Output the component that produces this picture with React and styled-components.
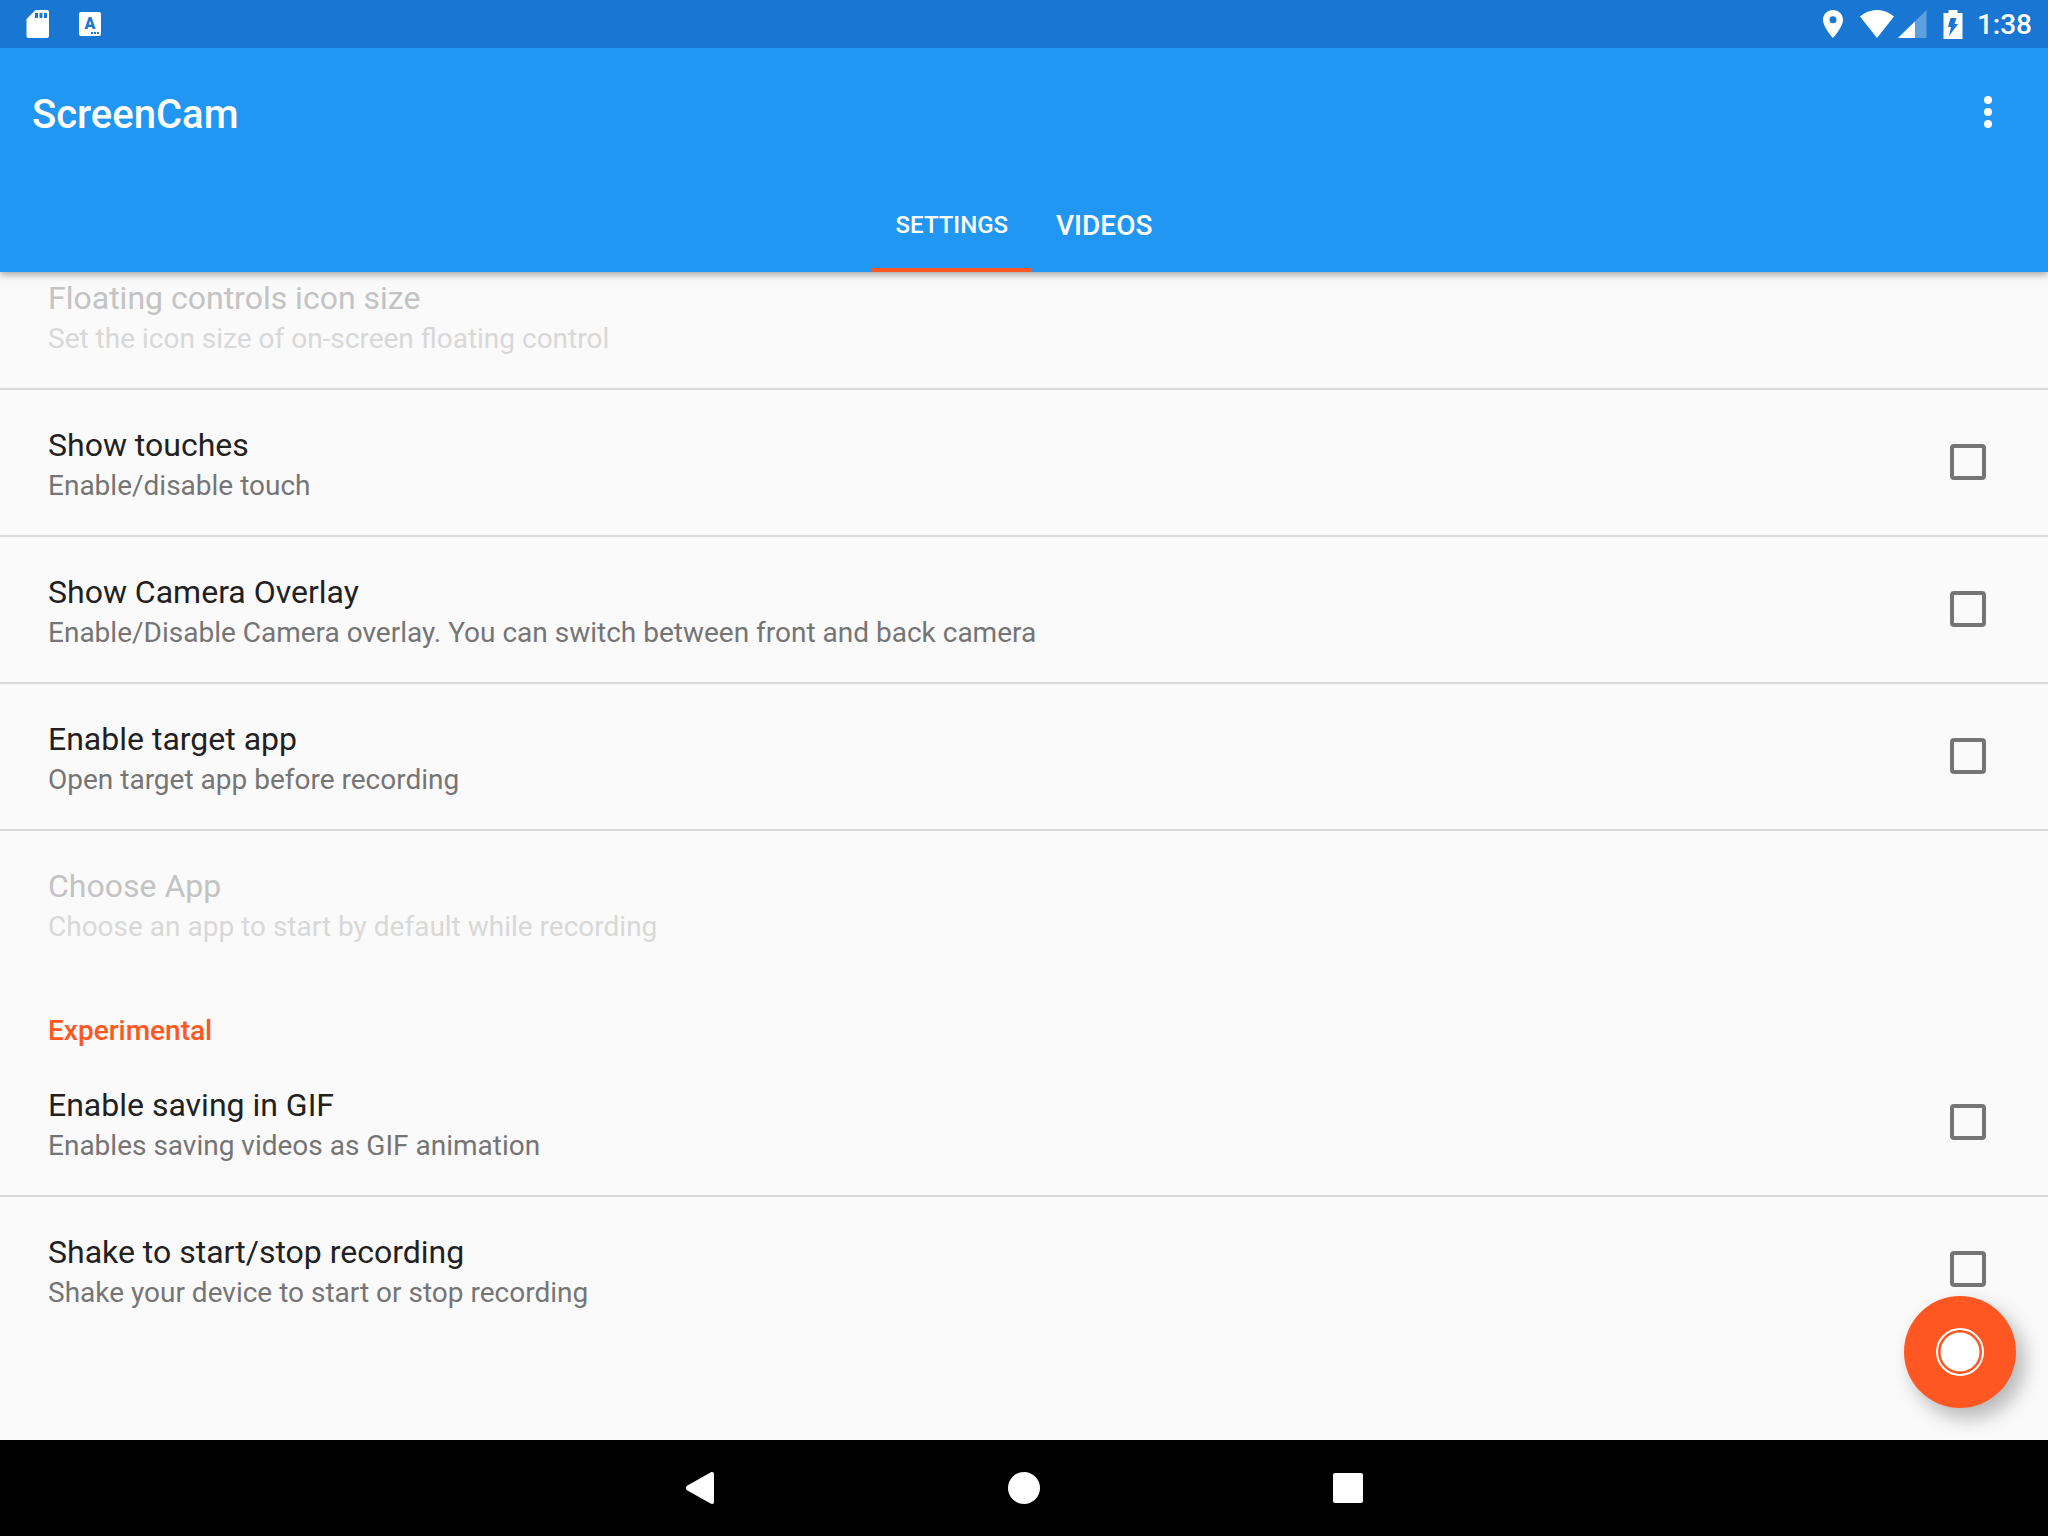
import React, { useState } from 'react';
import styled, { createGlobalStyle } from 'styled-components';

const tabs = [
    { id: 'settings', label: 'SETTINGS' },
    { id: 'videos', label: 'VIDEOS' },
];

const general = [
    { id: 'icon-size', title: 'Floating controls icon size', desc: 'Set the icon size of on-screen floating control', disabled: true },
    { id: 'touches', title: 'Show touches', desc: 'Enable/disable touch', check: true },
    { id: 'camera', title: 'Show Camera Overlay', desc: 'Enable/Disable Camera overlay. You can switch between front and back camera', check: true },
    { id: 'target', title: 'Enable target app', desc: 'Open target app before recording', check: true },
    { id: 'choose', title: 'Choose App', desc: 'Choose an app to start by default while recording', disabled: true },
];

const experimental = [
    { id: 'gif', title: 'Enable saving in GIF', desc: 'Enables saving videos as GIF animation', check: true },
    { id: 'shake', title: 'Shake to start/stop recording', desc: 'Shake your device to start or stop recording', check: true },
];

const StatusIcons = () => (
    <StatusBar>
        <StatusGroup $gap="29px">
            <svg width="24" height="28" viewBox="0 0 24 28" fill="#fff">
                <path fillRule="evenodd" d="M9.5 0H21a2 2 0 0 1 2 2v24a2 2 0 0 1-2 2H2.500a2 2 0 0 1-2-2V9ZM9 3v5h3V3Zm4.500 0v5h3V3ZM18 3v5h3V3Z" />
            </svg>
            <svg width="22" height="24" viewBox="0 0 22 24">
                <rect width="22" height="24" rx="2" fill="#fff" />
                <text x="11" y="17" textAnchor="middle" fontSize="16" fontWeight="900" fill="#1976d2">A</text>
                <path d="M12 20h2v2h-2zM15 20h2v2h-2zM18 20h2v2h-2z" fill="#1976d2" />
            </svg>
        </StatusGroup>
        <StatusGroup $gap="14px">
            <StatusGroup $gap="16px">
                <svg width="22" height="28" viewBox="0 0 22 28" fill="#fff">
                    <path fillRule="evenodd" d="M11 0C5.500 0 1 4.400 1 9.800 1 17.200 11 28 11 28s10-10.800 10-18.200C21 4.400 16.500 0 11 0Zm0 13.300a3.500 3.500 0 1 1 0-7 3.500 3.500 0 0 1 0 7Z" />
                </svg>
                <StatusGroup $gap="4px">
                    <svg width="34" height="28" viewBox="0 0 34 28" fill="#fff">
                        <path d="M17 28 34 6.500C33 5.700 26.500 0 17 0S1 5.700 0 6.500Z" />
                    </svg>
                    <svg width="29" height="28" viewBox="0 0 29 28" fill="#fff">
                        <path d="M0 28 28.500 0v28Z" fillOpacity=".3" />
                        <path d="M0 28 17 11.500V28Z" />
                    </svg>
                </StatusGroup>
                <svg width="20" height="29" viewBox="0 0 20 29" fill="#fff">
                    <path d="M5.500 0h9v3H19.500v26H.5V3h5Z" />
                    <path d="M7.500 8h6l-2 6h3.500l-9 12 2-9H5Z" fill="#1976d2" />
                </svg>
            </StatusGroup>
            <Clock>1:38</Clock>
        </StatusGroup>
    </StatusBar>
);

const Setting = ({ item, value, onChange }) => (
    <Row>
        <Texts>
            <Title htmlFor={item.check ? item.id : undefined} as={item.check ? 'label' : 'div'} $disabled={item.disabled}>{item.title}</Title>
            <Desc $disabled={item.disabled}>{item.desc}</Desc>
        </Texts>
        {item.check && <Check id={item.id} type="checkbox" checked={value} onChange={() => onChange(item.id)} />}
    </Row>
);

const App = () => {
    const [tab, setTab] = useState('settings');
    const [checked, setChecked] = useState({});

    const toggle = (id) => {
        setChecked({ ...checked, [id]: !checked[id] });
    };

    const renderRow = (item) => (
        <Setting key={item.id} item={item} value={!!checked[item.id]} onChange={toggle} />
    );

    return (
        <Screen>
            <GlobalStyle />
            <StatusIcons />
            <Header>
                <Toolbar>
                    <AppName>ScreenCam</AppName>
                    <MenuButton aria-label="More options">
                        <svg width="8" height="32" viewBox="0 0 8 32" fill="#fff">
                            <circle cx="4" cy="4" r="4" />
                            <circle cx="4" cy="16" r="4" />
                            <circle cx="4" cy="28" r="4" />
                        </svg>
                    </MenuButton>
                </Toolbar>
                <Tabs role="tablist">
                    {tabs.map((t) => (
                        <Tab key={t.id} role="tab" aria-selected={tab === t.id} $active={tab === t.id} onClick={() => setTab(t.id)}>
                            {t.label}
                        </Tab>
                    ))}
                </Tabs>
            </Header>
            <Main>
                <Scroller>
                    <List>{general.map(renderRow)}</List>
                    <Category>Experimental</Category>
                    <List>{experimental.map(renderRow)}</List>
                </Scroller>
                <RecordButton aria-label="Record">
                    <svg width="48" height="48" viewBox="0 0 48 48">
                        <circle cx="24" cy="24" r="23" fill="none" stroke="#fff" strokeWidth="2" />
                        <circle cx="24" cy="24" r="19.500" fill="#fff" />
                    </svg>
                </RecordButton>
            </Main>
            <NavBar>
                <NavButton aria-label="Back">
                    <svg width="32" height="32" viewBox="0 0 32 32" fill="#fff">
                        <path d="M3 13.800 26.500.5C28.500-.6 30 .3 30 2v28c0 1.700-1.500 2.600-3.500 1.500L3 18.200c-1.400-.9-1.400-3.500 0-4.400Z" />
                    </svg>
                </NavButton>
                <NavButton aria-label="Home">
                    <svg width="32" height="32" viewBox="0 0 32 32" fill="#fff">
                        <circle cx="16" cy="16" r="16" />
                    </svg>
                </NavButton>
                <NavButton aria-label="Recents">
                    <svg width="32" height="32" viewBox="0 0 32 32" fill="#fff">
                        <rect x="1" y="1" width="30" height="30" rx="2" />
                    </svg>
                </NavButton>
            </NavBar>
        </Screen>
    );
}

const GlobalStyle = createGlobalStyle`
    * {
        box-sizing: border-box;
    }
    body {
        margin: 0;
        background-color: #fafafa;
        font-family: Roboto, "Liberation Sans", sans-serif;
    }
    button {
        font-family: inherit;
        border: none;
        background: none;
        padding: 0;
        cursor: pointer;
    }
    svg {
        display: block;
    }
`;

const Screen = styled.div`
    display: flex;
    flex-direction: column;
    height: 100vh;
`;

const StatusBar = styled.div`
    display: flex;
    justify-content: space-between;
    align-items: center;
    flex-shrink: 0;
    height: 48px;
    padding: 0 16px 0 26px;
    background-color: #1976d2;
    z-index: 2;
`;

const StatusGroup = styled.div`
    display: flex;
    align-items: center;
    gap: ${(props) => props.$gap};
`;

const Clock = styled.span`
    padding-top: 2px;
    font-size: 28px;
    font-weight: 500;
    line-height: 46px;
    color: #fff;
`;

const Header = styled.header`
    flex-shrink: 0;
    background-color: #2196f3;
    box-shadow: 0 2px 8px rgba(0, 0, 0, 0.4);
    z-index: 1;
`;

const Toolbar = styled.div`
    display: flex;
    justify-content: space-between;
    align-items: center;
    height: 128px;
    padding: 0 20px 0 32px;
`;

const AppName = styled.h1`
    margin: 0;
    padding-top: 6px;
    font-size: 40px;
    font-weight: 500;
    line-height: 48px;
    color: #fff;
`;

const MenuButton = styled.button`
    display: flex;
    justify-content: center;
    align-items: center;
    width: 80px;
    height: 96px;
`;

const Tabs = styled.div`
    display: flex;
    justify-content: center;
    height: 96px;
`;

const Tab = styled.button`
    padding: 6px 24px 0;
    border-bottom: 4px solid ${(props) => (props.$active ? '#ff5722' : 'transparent')};
    font-size: ${(props) => (props.$active ? '24px' : '28px')};
    font-weight: 500;
    color: #fff;
`;

const Main = styled.main`
    position: relative;
    flex: 1;
    min-height: 0;
    overflow: hidden;
`;

/* the list is scrolled a little way under the header */
const Scroller = styled.div`
    margin-top: -29px;
`;

const List = styled.ul`
    margin: 0;
    padding: 0;
    list-style: none;
`;

const Row = styled.li`
    display: flex;
    justify-content: space-between;
    align-items: flex-start;
    padding: 32px 62px 31px 48px;

    & + & {
        border-top: 2px solid #dbdbdb;
    }
`;

const Texts = styled.div`
    display: flex;
    flex-direction: column;
`;

const Title = styled.label`
    font-size: 32px;
    line-height: 46px;
    color: ${(props) => (props.$disabled ? '#c3c3c3' : '#212121')};
`;

const Desc = styled.div`
    font-size: 28px;
    line-height: 36px;
    color: ${(props) => (props.$disabled ? '#d8d8d8' : '#757575')};
`;

const Check = styled.input`
    appearance: none;
    width: 36px;
    height: 36px;
    margin: 22px 0 0;
    border: 4px solid #757575;
    border-radius: 4px;
    cursor: pointer;

    &:checked {
        border-color: #ff5722;
        background-color: #ff5722;
    }
`;

const Category = styled.h2`
    margin: 0;
    padding: 36px 48px 0;
    font-size: 28px;
    font-weight: 500;
    line-height: 38px;
    color: #ff5722;
`;

const RecordButton = styled.button`
    display: flex;
    justify-content: center;
    align-items: center;
    position: absolute;
    right: 32px;
    bottom: 32px;
    width: 112px;
    height: 112px;
    && {
        border-radius: 56px;
        background-color: #ff5722;
    }
    box-shadow: 8px 10px 20px rgba(0, 0, 0, 0.28);
`;

const NavBar = styled.nav`
    display: flex;
    justify-content: center;
    gap: 164px;
    flex-shrink: 0;
    height: 96px;
    background-color: #000;
`;

const NavButton = styled.button`
    display: flex;
    justify-content: center;
    align-items: center;
    width: 160px;
`;

export default App;
